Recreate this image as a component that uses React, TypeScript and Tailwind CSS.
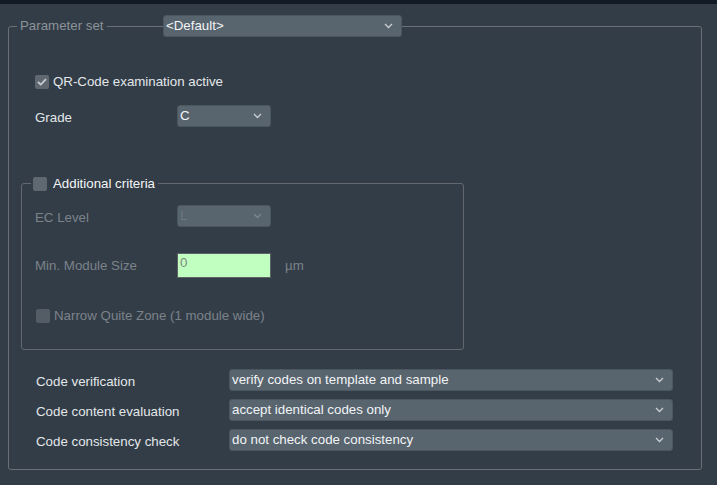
function Chevron({ dim }: { dim?: boolean }) {
  return (
    <svg width="9" height="6" viewBox="0 0 9 6" className="shrink-0">
      <path d="M1 1 L4.5 4.5 L8 1" fill="none" stroke={dim ? "#7d868e" : "#c9ced3"} strokeWidth="1.3" />
    </svg>
  );
}

function Combo({ value, w, dim }: { value: string; w: string; dim?: boolean }) {
  return (
    <div className={`${w} h-[22px] flex items-center justify-between bg-[#58646e] border border-[#4c5660] rounded-[3px] pl-[2px] pr-[8px] shrink-0`}>
      <span className={`leading-[16px] ${dim ? "text-[#6d7880]" : "text-[#f2f4f6]"}`}>{value}</span>
      <Chevron dim={dim} />
    </div>
  );
}

function Check({ checked, dim }: { checked?: boolean; dim?: boolean }) {
  return (
    <div className={`w-[14px] h-[14px] rounded-[2px] flex items-center justify-center shrink-0 ${dim ? "bg-[#545d65]" : "bg-[#5f6870]"}`}>
      {checked && (
        <svg width="10" height="8" viewBox="0 0 10 8">
          <path d="M1 4 L3.8 6.6 L9 1.2" fill="none" stroke="#c6cbd0" strokeWidth="1.8" />
        </svg>
      )}
    </div>
  );
}

export default function App() {
  return (
    <div className="w-[717px] h-[485px] bg-[#333d47] font-['Liberation_Sans',Arial,sans-serif] text-[13.3px] text-[#e3e7ea] overflow-hidden">
      <div className="h-[4px] bg-[#111a25]" />

      <div className="relative ml-[8px] mr-[15px] mt-[22px] h-[444px] border border-[#6a7076] rounded-[3px]">
        <div className="absolute -top-[9px] left-[8px] px-[3px] bg-[#333d47] text-[#8c9399] leading-[16px]">Parameter set</div>
        <div className="absolute -top-[12px] left-[154px]">
          <Combo value="<Default>" w="w-[239px]" />
        </div>

        <div className="flex flex-col pl-[12px] pt-[44px]">
          <div className="flex items-center gap-[4px] ml-[14px] h-[22px]">
            <Check checked />
            <span>QR-Code examination active</span>
          </div>

          <div className="flex items-center ml-[14px] mt-[12px] h-[22px]">
            <span className="w-[142px] pt-[3px]">Grade</span>
            <Combo value="C" w="w-[94px]" />
          </div>

          <div className="relative mt-[56px] w-[443px] h-[167px] border border-[#62686e] rounded-[3px]">
            <div className="absolute -top-[8px] left-[9px] pl-[2px] pr-[3px] bg-[#333d47] flex items-center gap-[6px] leading-[16px]">
              <Check />
              <span className="text-[#f4f6f8]">Additional criteria</span>
            </div>

            <div className="flex flex-col pl-[13px] pt-[21px]">
              <div className="flex items-center h-[22px]">
                <span className="w-[142px] pt-[3px] text-[#7b838a]">EC Level</span>
                <Combo value="L" w="w-[94px]" dim />
              </div>

              <div className="flex items-center mt-[26px] h-[25px]">
                <span className="w-[142px] pt-[1px] text-[#7b838a]">Min. Module Size</span>
                <div className="w-[94px] h-[25px] bg-[#c0ffc0] border border-[#5b6166] pl-[2px] text-[#7d8a7d] leading-[18px] shrink-0">0</div>
                <span className="ml-[14px] text-[#7b838a]">µm</span>
              </div>

              <div className="flex items-center gap-[4px] mt-[31px] h-[14px] ml-[1px]">
                <Check dim />
                <span className="text-[#7b838a]">Narrow Quite Zone (1 module wide)</span>
              </div>
            </div>
          </div>

          <div className="flex flex-col gap-[8px] mt-[19px] ml-[15px]">
            {[
              ["Code verification", "verify codes on template and sample"],
              ["Code content evaluation", "accept identical codes only"],
              ["Code consistency check", "do not check code consistency"],
            ].map(([label, value]) => (
              <div key={label} className="flex items-center h-[22px]">
                <span className="w-[193px] pt-[3px]">{label}</span>
                <Combo value={value} w="w-[444px]" />
              </div>
            ))}
          </div>
        </div>
      </div>
    </div>
  );
}
